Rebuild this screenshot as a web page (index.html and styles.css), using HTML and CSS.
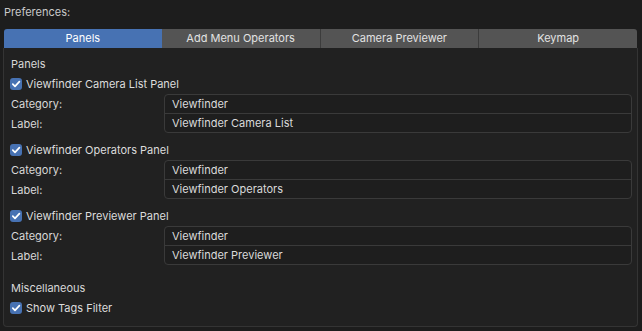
FILE: index.html
```html
<!DOCTYPE html>
<html lang="en">
<head>
	<meta charset="UTF-8">
	<title>Preferences</title>
	<link rel="stylesheet" href="styles.css">
</head>
<body>
	<div class="prefs-title">Preferences:</div>
	<ul class="tabs">
		<li class="tab selected">Panels</li>
		<li class="tab">Add Menu Operators</li>
		<li class="tab">Camera Previewer</li>
		<li class="tab">Keymap</li>
	</ul>
	<div class="panel">
		<div class="row heading">Panels</div>

		<label class="row check"><span class="box"><svg viewBox="0 0 12 12"><path d="M2.8 6.2 L5 8.4 L9.4 3.6"/></svg></span>Viewfinder Camera List Panel</label>
		<div class="fields">
			<div class="names">
				<div class="name">Category:</div>
				<div class="name">Label:</div>
			</div>
			<div class="inputs">
				<div class="input">Viewfinder</div>
				<div class="input">Viewfinder Camera List</div>
			</div>
		</div>

		<label class="row check"><span class="box"><svg viewBox="0 0 12 12"><path d="M2.8 6.2 L5 8.4 L9.4 3.6"/></svg></span>Viewfinder Operators Panel</label>
		<div class="fields">
			<div class="names">
				<div class="name">Category:</div>
				<div class="name">Label:</div>
			</div>
			<div class="inputs">
				<div class="input">Viewfinder</div>
				<div class="input">Viewfinder Operators</div>
			</div>
		</div>

		<label class="row check"><span class="box"><svg viewBox="0 0 12 12"><path d="M2.8 6.2 L5 8.4 L9.4 3.6"/></svg></span>Viewfinder Previewer Panel</label>
		<div class="fields">
			<div class="names">
				<div class="name">Category:</div>
				<div class="name">Label:</div>
			</div>
			<div class="inputs">
				<div class="input">Viewfinder</div>
				<div class="input">Viewfinder Previewer</div>
			</div>
		</div>

		<div class="row heading misc">Miscellaneous</div>
		<label class="row check"><span class="box"><svg viewBox="0 0 12 12"><path d="M2.8 6.2 L5 8.4 L9.4 3.6"/></svg></span>Show Tags Filter</label>
	</div>
</body>
</html>
```

FILE: styles.css
```css
body {
  margin: 0;
  background: #1d1d1d;
  color: #d8d8d8;
  font-family: Inter, "Noto Sans", sans-serif;
  font-size: 11px;
  width: 642px;
  height: 331px;
  overflow: hidden;
}

.prefs-title {
  height: 24px;
  line-height: 24px;
  padding-left: 4px;
  color: #c9c9c9;
}

.tabs {
  display: flex;
  margin: 5px 5px 0 4px;
  padding: 0;
  list-style: none;
  height: 19px;
}

.tab {
  flex: 1;
  text-align: center;
  line-height: 19px;
  background: #545454;
  color: #e2e2e2;
  border-left: 1px solid #3c3c3c;
}
.tab:first-child {
  border-left: none;
  border-radius: 3px 0 0 0;
}
.tab:last-child {
  border-radius: 0 3px 0 0;
}
.tab.selected {
  background: #4772b3;
  color: #ffffff;
}
.tab.selected + .tab {
  border-left: none;
}

.panel {
  margin: 0 4px 0 3px;
  height: 279px;
  box-sizing: border-box;
  padding: 6px 5px 0 6px;
  background: #212121;
  border: 1px solid #343434;
  border-top: none;
  border-radius: 0 0 4px 4px;
}

.row {
  display: flex;
  align-items: center;
  height: 20px;
}

.heading {
  padding-left: 1px;
}
.misc {
  margin-top: 13px;
}

.check {
  gap: 4px;
  color: #dcdcdc;
}

.box {
  width: 12px;
  height: 12px;
  border-radius: 3px;
  background: #4772b3;
  display: flex;
}
.box svg {
  width: 12px;
  height: 12px;
  fill: none;
  stroke: #ffffff;
  stroke-width: 1.7;
  stroke-linecap: round;
  stroke-linejoin: round;
}

.fields {
  display: flex;
  margin-bottom: 7px;
}

.names {
  width: 153px;
  padding-left: 1px;
}
.name {
  height: 19.5px;
  line-height: 20px;
}

.inputs {
  flex: 1;
  border: 1px solid #3a3a3a;
  border-radius: 4px;
  background: #1e1e1e;
  overflow: hidden;
}
.input {
  height: 18px;
  line-height: 18px;
  padding-left: 7px;
  color: #dadada;
}
.input + .input {
  border-top: 1px solid #3a3a3a;
}
```
